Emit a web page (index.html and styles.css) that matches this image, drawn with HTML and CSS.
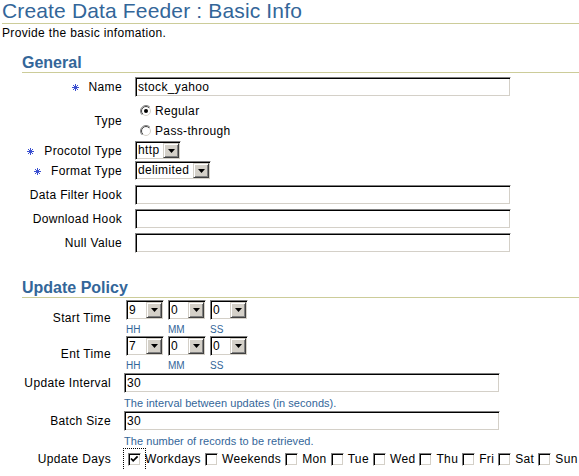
FILE: index.html
```html
<!DOCTYPE html>
<html lang="en">
<head>
<meta charset="utf-8">
<title>Create Data Feeder : Basic Info</title>
<link rel="stylesheet" href="styles.css">
</head>
<body>
<svg class="svg-defs" width="0" height="0" aria-hidden="true">
  <defs>
    <linearGradient id="radioOuter" x1="0" y1="0" x2="1" y2="1">
      <stop offset="0.5" stop-color="#808080"/>
      <stop offset="0.5" stop-color="#ffffff"/>
    </linearGradient>
    <linearGradient id="radioInner" x1="0" y1="0" x2="1" y2="1">
      <stop offset="0.5" stop-color="#404040"/>
      <stop offset="0.5" stop-color="#d4d0c8"/>
    </linearGradient>
  </defs>
</svg>
<div class="page">
  <h1 class="page-title">Create Data Feeder : Basic Info</h1>
  <p class="intro">Provide the basic infomation.</p>

  <section class="section section-general">
    <h2 class="section-title">General</h2>
    <div class="form form-general">
      <div class="row row-name">
        <div class="label"><svg class="req" width="7" height="7" viewBox="0 0 7 7"><path d="M3.5 0V7M0 3.5H7M1 1L6 6M6 1L1 6"/></svg>Name</div>
        <div class="field"><div class="textbox">stock_yahoo</div></div>
      </div>
      <div class="row row-type">
        <div class="label">Type</div>
        <div class="field radios">
          <div class="radio-line">
            <svg class="radio" width="12" height="12" viewBox="0 0 12 12"><circle cx="6" cy="6" r="5.5" fill="#fff" stroke="url(#radioOuter)"/><circle cx="6" cy="6" r="4.5" fill="#fff" stroke="url(#radioInner)"/><circle cx="6" cy="6" r="2" fill="#000"/></svg>Regular
          </div>
          <div class="radio-line">
            <svg class="radio" width="12" height="12" viewBox="0 0 12 12"><circle cx="6" cy="6" r="5.5" fill="#fff" stroke="url(#radioOuter)"/><circle cx="6" cy="6" r="4.5" fill="#fff" stroke="url(#radioInner)"/></svg>Pass-through
          </div>
        </div>
      </div>
      <div class="row row-select">
        <div class="label"><svg class="req" width="7" height="7" viewBox="0 0 7 7"><path d="M3.5 0V7M0 3.5H7M1 1L6 6M6 1L1 6"/></svg>Procotol Type</div>
        <div class="field field-top">
          <div class="select"><span class="select-value">http</span><span class="select-button"><svg width="7" height="4" viewBox="0 0 7 4"><polygon points="0,0 7,0 3.5,4"/></svg></span></div>
        </div>
      </div>
      <div class="row row-select row-gap">
        <div class="label"><svg class="req" width="7" height="7" viewBox="0 0 7 7"><path d="M3.5 0V7M0 3.5H7M1 1L6 6M6 1L1 6"/></svg>Format Type</div>
        <div class="field field-top">
          <div class="select"><span class="select-value">delimited</span><span class="select-button"><svg width="7" height="4" viewBox="0 0 7 4"><polygon points="0,0 7,0 3.5,4"/></svg></span></div>
        </div>
      </div>
      <div class="row row-text row-gap">
        <div class="label">Data Filter Hook</div>
        <div class="field"><div class="textbox"></div></div>
      </div>
      <div class="row row-text row-gap">
        <div class="label">Download Hook</div>
        <div class="field"><div class="textbox"></div></div>
      </div>
      <div class="row row-text">
        <div class="label">Null Value</div>
        <div class="field"><div class="textbox"></div></div>
      </div>
    </div>
  </section>

  <section class="section section-policy">
    <h2 class="section-title">Update Policy</h2>
    <div class="form form-policy">
      <div class="row row-time">
        <div class="label">Start Time</div>
        <div class="field field-top time-group">
          <div class="time-unit">
            <div class="select select-time"><span class="select-value">9</span><span class="select-button"><svg width="7" height="4" viewBox="0 0 7 4"><polygon points="0,0 7,0 3.5,4"/></svg></span></div>
            <div class="time-caption">HH</div>
          </div>
          <div class="time-unit">
            <div class="select select-time"><span class="select-value">0</span><span class="select-button"><svg width="7" height="4" viewBox="0 0 7 4"><polygon points="0,0 7,0 3.5,4"/></svg></span></div>
            <div class="time-caption">MM</div>
          </div>
          <div class="time-unit">
            <div class="select select-time"><span class="select-value">0</span><span class="select-button"><svg width="7" height="4" viewBox="0 0 7 4"><polygon points="0,0 7,0 3.5,4"/></svg></span></div>
            <div class="time-caption">SS</div>
          </div>
        </div>
      </div>
      <div class="row row-time row-time-last">
        <div class="label">Ent Time</div>
        <div class="field field-top time-group">
          <div class="time-unit">
            <div class="select select-time"><span class="select-value">7</span><span class="select-button"><svg width="7" height="4" viewBox="0 0 7 4"><polygon points="0,0 7,0 3.5,4"/></svg></span></div>
            <div class="time-caption">HH</div>
          </div>
          <div class="time-unit">
            <div class="select select-time"><span class="select-value">0</span><span class="select-button"><svg width="7" height="4" viewBox="0 0 7 4"><polygon points="0,0 7,0 3.5,4"/></svg></span></div>
            <div class="time-caption">MM</div>
          </div>
          <div class="time-unit">
            <div class="select select-time"><span class="select-value">0</span><span class="select-button"><svg width="7" height="4" viewBox="0 0 7 4"><polygon points="0,0 7,0 3.5,4"/></svg></span></div>
            <div class="time-caption">SS</div>
          </div>
        </div>
      </div>
      <div class="row row-text">
        <div class="label">Update Interval</div>
        <div class="field"><div class="textbox">30</div></div>
      </div>
      <div class="row row-hint">
        <div class="label"></div>
        <div class="field hint">The interval between updates (in seconds).</div>
      </div>
      <div class="row row-text">
        <div class="label">Batch Size</div>
        <div class="field"><div class="textbox">30</div></div>
      </div>
      <div class="row row-hint row-hint-last">
        <div class="label"></div>
        <div class="field hint">The number of records to be retrieved.</div>
      </div>
      <div class="row row-days">
        <div class="label">Update Days</div>
        <div class="field days">
          <span class="check-item"><span class="checkbox checked focused"><svg width="11" height="11" viewBox="0 0 11 11"><path d="M2 4.5L4.2 6.8L8.6 2.4" /></svg></span>Workdays</span>
          <span class="check-item"><span class="checkbox"></span>Weekends</span>
          <span class="check-item"><span class="checkbox"></span>Mon</span>
          <span class="check-item"><span class="checkbox"></span>Tue</span>
          <span class="check-item"><span class="checkbox"></span>Wed</span>
          <span class="check-item"><span class="checkbox"></span>Thu</span>
          <span class="check-item"><span class="checkbox"></span>Fri</span>
          <span class="check-item"><span class="checkbox"></span>Sat</span>
          <span class="check-item"><span class="checkbox"></span>Sun</span>
        </div>
      </div>
    </div>
  </section>
</div>
</body>
</html>
```

FILE: styles.css
```css
* {
  box-sizing: border-box;
}

html,
body {
  margin: 0;
  padding: 0;
  background: #ffffff;
}

body {
  font-family: "Liberation Sans", Arial, sans-serif;
  font-size: 12px;
  color: #000000;
  letter-spacing: 0.35px;
  overflow: hidden;
}

.svg-defs {
  display: block;
  width: 0;
  height: 0;
}

.page {
  padding-left: 2px;
}

.page-title {
  margin: 0;
  font-size: 21px;
  font-weight: normal;
  line-height: 22px;
  color: #336699;
  letter-spacing: 0.15px;
  padding-bottom: 1px;
  border-bottom: 1px solid #cccc99;
  white-space: nowrap;
}

.intro {
  margin: 2px 0 0;
  line-height: 15px;
}

.section-title {
  margin: 0 0 0 20px;
  font-size: 16px;
  line-height: 19px;
  font-weight: bold;
  color: #336699;
  letter-spacing: 0;
  border-bottom: 1px solid #cccc99;
}

.section-general .section-title {
  margin-top: 12px;
}

.section-policy .section-title {
  margin-top: 25px;
}

.form-general {
  margin-top: 4px;
}

.form-policy {
  margin-top: 2px;
}

.row {
  display: flex;
  align-items: center;
}

.label {
  flex: none;
  display: flex;
  align-items: center;
  justify-content: flex-end;
  white-space: nowrap;
  line-height: 15px;
}

.form-general .label {
  width: 120px;
}

.form-policy .label {
  width: 109px;
}

.field {
  margin-left: 13px;
  display: flex;
  align-items: center;
  white-space: nowrap;
}

.field-top {
  align-self: flex-start;
}

.req {
  flex: none;
  margin-right: 10px;
  stroke: #3a4fd0;
  stroke-width: 1;
  fill: none;
}

/* rows of the general section */
.row-name {
  height: 20px;
  margin-bottom: 4px;
}

.row-type {
  height: 40px;
}

.row-select {
  height: 20px;
}

.row-text {
  height: 20px;
}

.row-gap {
  margin-bottom: 4px;
}

/* text boxes */
.textbox {
  width: 376px;
  height: 20px;
  border: 1px solid;
  border-color: #808080 #ffffff #ffffff #808080;
  box-shadow: inset 1px 1px 0 #000000, inset -1px -1px 0 #d4d0c8;
  background: #ffffff;
  padding: 0 2px;
  line-height: 18px;
  overflow: hidden;
}

/* radios */
.radios {
  flex-direction: column;
  align-items: flex-start;
}

.radio-line {
  height: 20px;
  display: flex;
  align-items: center;
}

.radio {
  flex: none;
  margin: 0 3px 0 5px;
}

/* select boxes */
.select {
  display: flex;
  height: 19px;
  border: 1px solid;
  border-color: #808080 #ffffff #ffffff #808080;
  box-shadow: inset 1px 1px 0 #000000, inset -1px -1px 0 #d4d0c8;
  background: #ffffff;
  padding: 1px;
}

.select-value {
  flex: 1;
  padding: 0 4px 0 1px;
  line-height: 15px;
}

.select-button {
  flex: none;
  width: 16px;
  background: #d4d0c8;
  border: 1px solid;
  border-color: #d4d0c8 #404040 #404040 #d4d0c8;
  box-shadow: inset 1px 1px 0 #ffffff, inset -1px -1px 0 #808080;
  display: flex;
  align-items: center;
  justify-content: center;
}

.select-button svg {
  fill: #000000;
}

/* policy section */
.row-time {
  height: 36px;
}

.row-time-last {
  margin-bottom: 1px;
}

.time-group {
  margin-left: 15px;
}

.time-unit {
  display: flex;
  flex-direction: column;
  width: 38px;
  margin-right: 4px;
}

.select-time {
  width: 38px;
  height: 20px;
}

.select-time .select-value {
  line-height: 16px;
}

.time-caption {
  padding-top: 4px;
  line-height: 12px;
  font-size: 10px;
  letter-spacing: 0;
  color: #336699;
}

.row-hint {
  height: 18px;
  align-items: flex-start;
}

.row-hint-last {
  height: 17px;
}

.hint {
  padding-top: 3px;
  line-height: 14px;
  font-size: 11px;
  letter-spacing: 0.05px;
  color: #336699;
}

.row-days {
  height: 22px;
}

.days {
  align-self: stretch;
}

.check-item {
  display: inline-flex;
  align-items: center;
}

.checkbox {
  flex: none;
  width: 13px;
  height: 13px;
  margin: 0 4px 0 4px;
  border: 1px solid;
  border-color: #808080 #ffffff #ffffff #808080;
  box-shadow: inset 1px 1px 0 #000000, inset -1px -1px 0 #d4d0c8;
  background: #ffffff;
  display: flex;
}

.checkbox svg {
  fill: none;
  stroke: #000000;
  stroke-width: 1.8;
}

.checkbox.focused {
  outline: 1px dotted #000000;
  outline-offset: 4px;
}
```
